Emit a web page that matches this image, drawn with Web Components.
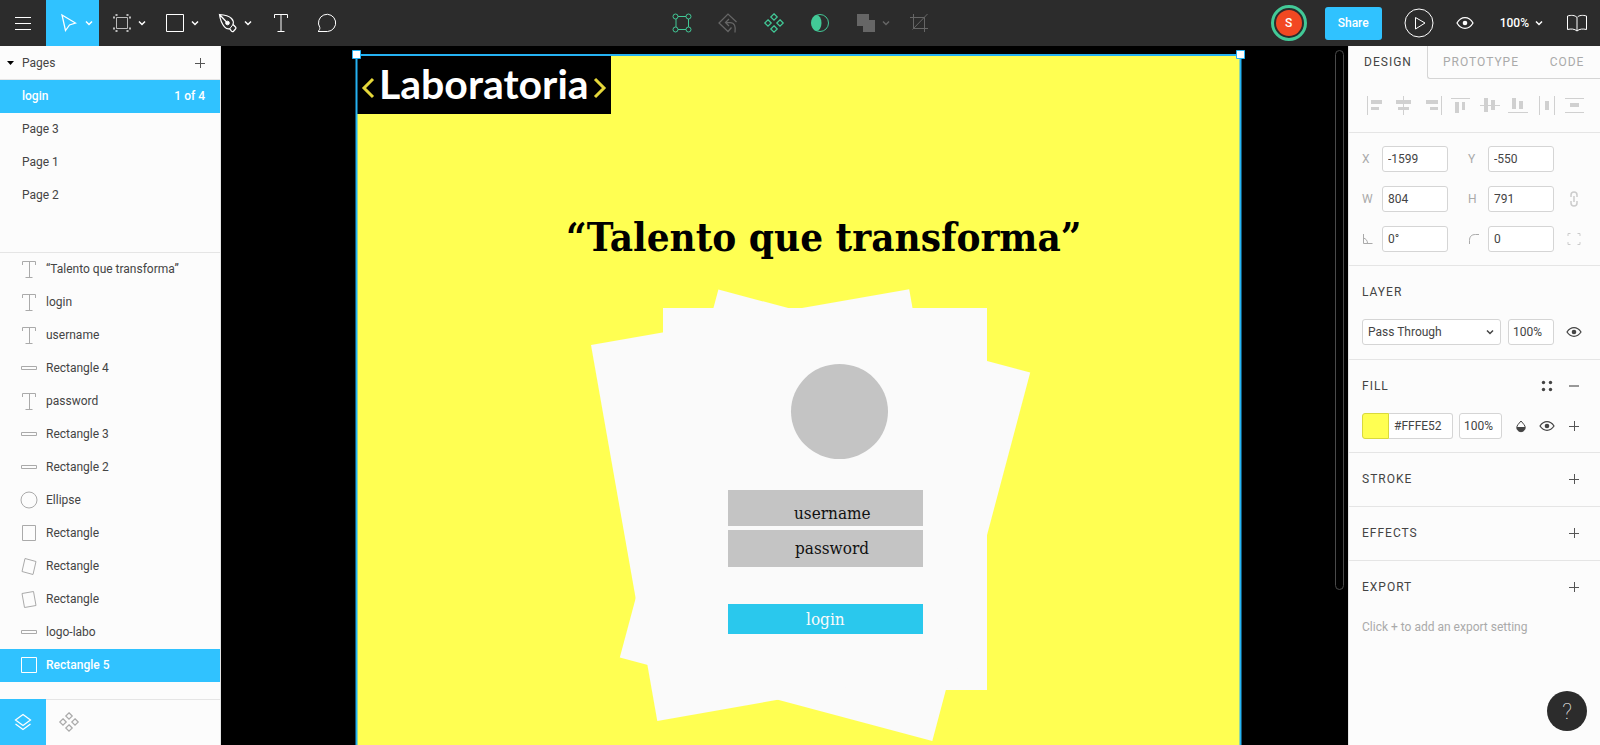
<!DOCTYPE html>
<html lang="es">
<head>
<meta charset="utf-8">
<title>login – Design editor</title>
<style>
  html, body { margin: 0; height: 100%; }
  body { font-family: Roboto, "Liberation Sans", sans-serif; font-size: 12px; color: #444; }
</style>
</head>
<body>
<design-app></design-app>

<script>
const ICONS = {
  menu: [24, 24, '<g shape-rendering="crispEdges"><path d="M4 6.5h16M4 12.5h16M4 18.5h16"/></g>'],
  move: [24, 24, '<path stroke-width="1.250" d="M5 4l13.500 8-6 2-4 5.500z"/>'],
  frame: [24, 24, '<g stroke="#bbb"><path d="M6.500 6.500h11v11h-11z"/><path d="M6.500 3v2M17.500 3v2M6.500 19v2M17.500 19v2M3 6.500h2M3 17.500h2M19 6.500h2M19 17.500h2" stroke-width="2"/></g>'],
  rect: [24, 24, '<path d="M3.500 3.500h17v17h-17z"/>'],
  pen: [24, 24, '<path stroke-width="1.250" d="M3.500 3.500c5 .3 9.500 1.500 12 4 1.800 1.800 2.200 4 1.500 6l2.500 2.500c.8.800.5 1.500 0 2l-2 2.200c-.6.600-1.400.5-2-.1l-1.800-2.300c-2 .5-3.700-.3-5.200-2-2.600-3-4.300-7-5-12.300zM3.500 3.500l7 7.500"/><circle cx="11.500" cy="12" r="1.800" fill="currentColor"/><path d="M13.700 17.800l3.300-4.300"/>'],
  text: [24, 24, '<path d="M5.500 7V3.500h13V7M12 3.500v17M8.500 20.500h7"/>'],
  comment: [24, 24, '<path d="M3 20.500c1.500-1.200 2-2.500 1.800-4A8.600 8.600 0 1 1 12.500 20.500z" stroke-linejoin="round"/>'],
  nodes: [24, 24, '<path d="M8 5.500h8M8 18.500h8M6 8v8M18.500 8v8"/><circle cx="5.500" cy="5.500" r="2.500"/><circle cx="18.500" cy="5.500" r="2.500"/><circle cx="5.500" cy="18.500" r="2.500"/><circle cx="18.500" cy="18.500" r="2.500"/>'],
  revert: [24, 24, '<path stroke-width="1.250" d="M20.500 11L12 3 3 12l9 8.500 3.500-4M9.500 11.500h4.500c4.500 0 6 4 5 10M13 8L9.500 11.500 13 15"/>'],
  component: [24, 24, '<path stroke-width="1.250" d="M12 2.800l3.200 3.200L12 9.200 8.800 6zM12 14.800l3.200 3.200L12 21.200 8.800 18zM6 8.800L9.200 12 6 15.200 2.800 12zM18 8.800l3.200 3.200-3.200 3.200-3.200-3.200z"/>'],
  mask: [24, 24, '<circle cx="12" cy="12" r="8.500"/><ellipse cx="8.500" cy="12" rx="5" ry="8" fill="currentColor" stroke="none"/>'],
  union: [24, 24, '<path fill="currentColor" stroke="none" d="M3 3h12v6h6v12H9v-6H3z"/>'],
  crop: [24, 24, '<path d="M3 6.500h14.500V21M6.500 3v14.500H21M5.500 18.500L20.500 3"/>'],
  play: [30, 30, '<circle cx="15" cy="15" r="14"/><path d="M11.500 9.500v11.500l9.500-6z"/>'],
  eye: [18, 14, '<path stroke-width="1.250" d="M1 7c2-3.500 5-5.300 8-5.300S15 3.500 17 7c-2 3.500-5 5.300-8 5.300S3 10.500 1 7z"/><circle cx="9" cy="7" r="2.300" fill="currentColor" stroke="none"/>'],
  eyeSmall: [16, 12, '<path stroke-width="1.250" d="M1 6c2-3 4.500-4.300 7-4.300S13 3 15 6c-2 3-4.500 4.300-7 4.300S3 9 1 6z"/><circle cx="8" cy="6" r="2.300" fill="currentColor" stroke="none"/>'],
  book: [24, 24, '<path d="M12 6.500C10 4 6 4 2.500 5v13.500c3.500-.8 7-.8 9.500 1.500 2.500-2.300 6-2.300 9.500-1.500V5C18 4 14 4 12 6.500zM12 6.500V20"/>'],
  chevron: [8, 8, '<path stroke-width="1.500" d="M1 2.500l3 3 3-3"/>'],
  plus: [12, 12, '<g shape-rendering="crispEdges" stroke="#555"><path d="M1 6.500h10M6.500 1v10"/></g>'],
  minus: [12, 12, '<path d="M1 6h10" stroke="#777" stroke-width="1.500"/>'],
  dots: [12, 12, '<g fill="currentColor" stroke="none"><circle cx="2.500" cy="2.500" r="1.700"/><circle cx="9.500" cy="2.500" r="1.700"/><circle cx="2.500" cy="9.500" r="1.700"/><circle cx="9.500" cy="9.500" r="1.700"/></g>'],
  drop: [12, 14, '<path d="M6 2C3.500 5 1.800 6.500 1.800 8.500a4.200 4.200 0 0 0 8.400 0C10.200 6.500 8.500 5 6 2z"/><path fill="currentColor" stroke="none" d="M1.800 8h8.400v.5a4.200 4.200 0 0 1-8.400 0z"/>'],
  caret: [8, 8, '<path fill="currentColor" stroke="none" d="M0 2h7L3.500 6z"/>'],
  layerText: [18, 18, '<path d="M2.500 5V1.500h13V5M9.500 1.500v16M5.500 17.500h7"/>'],
  layerLine: [18, 18, '<path d="M1.500 7.500h15v3h-15z"/>'],
  layerEllipse: [18, 18, '<circle cx="9" cy="9" r="8"/>'],
  layerPaper: [18, 18, '<path d="M2.500 1.500h13v15h-13z"/>'],
  layerRight: [18, 18, '<path d="M5 1.500l11 3-3 13-11-3z"/>'],
  layerLeft: [18, 18, '<path d="M2 3.500l11.500-2 2.500 14-11.500 2z"/>'],
  layerSquare: [18, 18, '<path d="M1.500 1.500h15v15h-15z"/>'],
  layers: [24, 24, '<path stroke-width="1.250" d="M12 4.500l7.500 5.500-7.500 5.500L4.500 10zM4.500 14L12 19.500l7.500-5.500"/>'],
  link: [10, 18, '<path d="M2 7V5a3 3 0 0 1 6 0v2M2 11v2a3 3 0 0 0 6 0v-2M5 6v6" stroke-width="1.500"/>'],
  angle: [12, 12, '<path d="M1.500 1v9.500h9M1 5c3 .5 4.500 2.500 4.500 5.500"/>'],
  radius: [12, 12, '<path d="M1.500 11V7.500c0-4 2-6 6-6H11"/>'],
  corners: [14, 14, '<path d="M1 4V1.500h2.500M10.500 1.500H13V4M13 10v2.500h-2.500M3.500 12.500H1V10"/>'],
  alLeft: [20, 20, '<path d="M1.500 1v19"/><path class="f" d="M5 5h11v4H5zM5 12h8v3H5z"/>'],
  alHCenter: [20, 20, '<path d="M9.500 1v19"/><path class="f" d="M2 5h15v4H2zM4 12h11v3H4z"/>'],
  alRight: [20, 20, '<path d="M18.500 1v19"/><path class="f" d="M3 5h12v4H3zM7 12h8v3H7z"/>'],
  alTop: [20, 20, '<path d="M0 3.500h19"/><path class="f" d="M4 7h4v11H4zM11 7h3v8h-3z"/>'],
  alVCenter: [20, 20, '<path d="M0 10.500h20"/><path class="f" d="M4 3h4v14H4zM11 5h4v10h-4z"/>'],
  alBottom: [20, 20, '<path d="M0 17.500h20"/><path class="f" d="M4 3h4v11H4zM11 6h4v8h-4z"/>'],
  distH: [20, 20, '<path d="M2.500 1v19M17.500 1v19"/><path class="f" d="M8 6h4v9H8z"/>'],
  distV: [20, 20, '<path d="M0 3.500h19M0 17.500h19"/><path class="f" d="M5 8h9v4H5z"/>']
};

const define = (name, template) => {
  customElements.define(name, class extends HTMLElement {
    connectedCallback() {
      if (this.shadowRoot) return;
      const root = this.attachShadow({ mode: 'open' });
      root.innerHTML = typeof template === 'function' ? template(this) : template;
    }
  });
};

define('ui-icon', el => {
  const [w, h, body] = ICONS[el.getAttribute('name')];
  return `<style>
    :host { display: block; flex: none; width: ${w}px; height: ${h}px; }
    svg { display: block; fill: none; stroke: currentColor; stroke-width: 1; }
    .f { fill: currentColor; stroke: none; }
  </style><svg width="${w}" height="${h}" viewBox="0 0 ${w} ${h}" aria-hidden="true">${body}</svg>`;
});

define('tool-button', el => `<style>
    :host { display: block; flex: none; color: #fff; }
    :host([tone="green"]) { color: #42c997; }
    :host([tone="dim"]) { color: #666; }
    button { display: flex; align-items: center; gap: 4px; height: 46px; padding: 0 11px; border: 0;
      background: none; color: inherit; font: inherit; }
    :host([menu]) button { padding: 0 6px 0 11px; }
    :host([active]) button { background: #30c2ff; }
  </style>
  <button type="button" aria-label="${el.getAttribute('label')}">
    <ui-icon name="${el.getAttribute('icon')}"></ui-icon>${el.hasAttribute('menu') ? '<ui-icon name="chevron"></ui-icon>' : ''}
  </button>`);

define('top-bar', `<style>
    :host { display: grid; grid-template-columns: 1fr auto 1fr; height: 46px; background: #2c2c2c; color: #fff; }
    div { display: flex; align-items: center; }
    .right { justify-content: flex-end; }
    button { border: 0; background: none; color: inherit; font: inherit; padding: 0; }
    .avatar { box-sizing: border-box; width: 36px; height: 36px; border-radius: 50%; border: 3px solid #42c997;
      padding: 2px; margin-right: 18px; display: flex; }
    .avatar span { flex: 1; border-radius: 50%; background: #f24822; line-height: 26px; text-align: center; font-weight: 500; }
    .share { width: 57px; height: 33px; border-radius: 3px; background: #30c2ff; font-weight: 500; margin-right: 22px; }
    .play { margin-right: 22px; }
    .eye { margin-right: 26px; }
    .zoom { display: flex; align-items: center; gap: 6px; font-weight: 500; margin-right: 11px; }
  </style>
  <div>
    <tool-button icon="menu" label="Menu"></tool-button>
    <tool-button icon="move" label="Move" menu active></tool-button>
    <tool-button icon="frame" label="Frame" menu></tool-button>
    <tool-button icon="rect" label="Rectangle" menu></tool-button>
    <tool-button icon="pen" label="Pen" menu></tool-button>
    <tool-button icon="text" label="Text"></tool-button>
    <tool-button icon="comment" label="Comment"></tool-button>
  </div>
  <div>
    <tool-button icon="nodes" label="Edit object" tone="green"></tool-button>
    <tool-button icon="revert" label="Reset instance" tone="dim"></tool-button>
    <tool-button icon="component" label="Create component" tone="green"></tool-button>
    <tool-button icon="mask" label="Use as mask" tone="green"></tool-button>
    <tool-button icon="union" label="Union" tone="dim" menu></tool-button>
    <tool-button icon="crop" label="Crop" tone="dim"></tool-button>
  </div>
  <div class="right">
    <button type="button" class="avatar"><span>S</span></button>
    <button type="button" class="share">Share</button>
    <button type="button" class="play" aria-label="Present"><ui-icon name="play"></ui-icon></button>
    <button type="button" class="eye" aria-label="View options"><ui-icon name="eye"></ui-icon></button>
    <button type="button" class="zoom">100%<ui-icon name="chevron"></ui-icon></button>
    <tool-button icon="book" label="Library"></tool-button>
  </div>`);

define('list-row', el => `<style>
    :host { display: block; }
    button { display: flex; align-items: center; gap: 8px; box-sizing: border-box; width: 100%; height: 33px;
      padding: 0 15px 2px 22px; border: 0; background: none; color: #444; font: inherit; text-align: left; }
    ui-icon { color: #aaa; margin: 1px 0 0 -2px; }
    .name { flex: 1; }
    :host([selected]) button { background: #30c2ff; color: #fff; font-weight: 500; }
    :host([selected]) ui-icon { color: #fff; }
  </style>
  <button type="button">
    ${el.hasAttribute('icon') ? `<ui-icon name="${el.getAttribute('icon')}"></ui-icon>` : ''}
    <span class="name"><slot></slot></span><slot name="note"></slot>
  </button>`);

define('layers-panel', `<style>
    :host { display: flex; flex-direction: column; background: #fcfcfc; border-right: 1px solid #e5e5e5; min-height: 0; }
    header { display: flex; align-items: center; height: 33px; padding: 0 14px 0 7px; border-bottom: 1px solid #e5e5e5; flex: none; }
    header > ui-icon { color: #000; margin-right: 7px; }
    h2 { flex: 1; margin: 0; font-size: 12px; font-weight: 400; }
    button { padding: 0; border: 0; background: none; color: #444; }
    .pages { flex: none; padding-bottom: 40px; border-bottom: 1px solid #e5e5e5; }
    .layers { flex: 1; min-height: 0; overflow: hidden; }
    footer { display: flex; flex: none; box-sizing: border-box; height: 46px; border-top: 1px solid #e5e5e5; }
    footer button { width: 46px; height: 46px; margin-top: -1px; padding: 0 11px; color: #aaa; }
    footer .on { background: #30c2ff; color: #fff; }
  </style>
  <header><ui-icon name="caret"></ui-icon><h2>Pages</h2>
    <button type="button" aria-label="Add page"><ui-icon name="plus"></ui-icon></button></header>
  <div class="pages">
    <list-row selected>login<span slot="note">1 of 4</span></list-row>
    <list-row>Page 3</list-row>
    <list-row>Page 1</list-row>
    <list-row>Page 2</list-row>
  </div>
  <div class="layers">
    <list-row icon="layerText">“Talento que transforma”</list-row>
    <list-row icon="layerText">login</list-row>
    <list-row icon="layerText">username</list-row>
    <list-row icon="layerLine">Rectangle 4</list-row>
    <list-row icon="layerText">password</list-row>
    <list-row icon="layerLine">Rectangle 3</list-row>
    <list-row icon="layerLine">Rectangle 2</list-row>
    <list-row icon="layerEllipse">Ellipse</list-row>
    <list-row icon="layerPaper">Rectangle</list-row>
    <list-row icon="layerRight">Rectangle</list-row>
    <list-row icon="layerLeft">Rectangle</list-row>
    <list-row icon="layerLine">logo-labo</list-row>
    <list-row icon="layerSquare" selected>Rectangle 5</list-row>
  </div>
  <footer>
    <button type="button" class="on" aria-label="Layers"><ui-icon name="layers"></ui-icon></button>
    <button type="button" aria-label="Components"><ui-icon name="component"></ui-icon></button>
  </footer>`);

define('design-canvas', `<style>
    :host { display: block; position: relative; overflow: hidden; background: #000; min-width: 0; }
    svg { position: absolute; left: 0; top: 0; display: block; overflow: visible; }
    .slab { font-family: "DejaVu Serif Condensed", "DejaVu Serif", serif; }
    .scroll { position: absolute; right: 4px; top: 4px; width: 7px; height: 538px; border: 1px solid #4a4a4a; border-radius: 5px; }
  </style>
  <svg width="1128" height="860" viewBox="0 0 1128 860">
    <rect x="136" y="9" width="884" height="870" fill="#ffff52"/>
    <rect x="136" y="9" width="254" height="59" fill="#000"/>
    <g fill="none" stroke="#e5d73a" stroke-width="3"><path d="M152 33l-9 9 9 9M374 33l9 9-9 9"/></g>
    <text x="158" y="53" font-family="Lato, sans-serif" font-weight="700" font-size="41" fill="#fff">Laboratoria</text>
    <text class="slab" x="345" y="205" font-weight="700" font-size="40" fill="#000">“Talento que transforma”</text>
    <g fill="#fafafa">
      <path d="M442 262h324v382H442z"/>
      <path d="M497.400 243.500L809.200 326.600 711.300 695 398.800 611.600z"/>
      <path d="M688.200 243.200L370 299 436.300 675 754.500 619z"/>
    </g>
    <g fill="#c4c4c4">
      <ellipse cx="618.500" cy="365.500" rx="48.500" ry="47.500"/>
      <path d="M507 444h195v36H507zM507 484h195v37H507z"/>
    </g>
    <path fill="#2ac8ed" d="M507 558h195v30H507z"/>
    <g class="slab" font-size="17" fill="#111">
      <text x="573" y="473">username</text>
      <text x="574" y="508">password</text>
      <text x="585" y="579" fill="#fafafa">login</text>
    </g>
    <path d="M135.500 870V9H1019.500V870" stroke="#25b2f2" stroke-width="2" fill="none"/>
    <path d="M131.500 4.500h8v8h-8zM1015.500 4.500h8v8h-8z" fill="#fff" stroke="#25b2f2"/>
  </svg>
  <div class="scroll"></div>`);

define('num-field', el => `<style>
    :host { display: flex; align-items: center; }
    label { width: 20px; color: #aaa; }
    input { box-sizing: border-box; width: 66px; height: 26px; padding: 0 5px; border: 1px solid #d5d5d5; border-radius: 3px;
      background: #fff; color: #444; font: inherit; }
  </style>
  <label for="v" aria-label="${el.getAttribute('label')}">${el.hasAttribute('icon') ? `<ui-icon name="${el.getAttribute('icon')}"></ui-icon>` : el.getAttribute('label')}</label>
  <input id="v" value="${el.getAttribute('value')}">`);

define('panel-section', el => `<style>
    :host { display: block; border-bottom: 1px solid #e5e5e5; padding: 0 20px 0 13px; }
    :host([last]) { border: 0; }
    header { display: flex; align-items: center; gap: 15px; height: 52px; padding-bottom: 1px; }
    h2 { flex: 1; margin: 0; font-size: 12px; font-weight: 400; letter-spacing: 1px; }
  </style>
  <header><h2>${el.getAttribute('heading')}</h2><slot name="actions"></slot></header><slot></slot>`);

define('design-panel', `<style>
    :host { display: block; background: #fcfcfc; border-left: 1px solid #e5e5e5; min-width: 0; overflow: hidden; }
    button { padding: 0; border: 0; background: none; color: #444; font: inherit; }
    nav { display: flex; height: 33px; }
    nav button { box-sizing: border-box; letter-spacing: 1px; color: #aaa; border-bottom: 1px solid #d5d5d5; padding: 0 15px 1px; }
    nav button.on { color: #444; border: 0; width: 78px; }
    nav .proto { border-left: 1px solid #d5d5d5; border-bottom-left-radius: 3px; }
    nav .code { flex: 1; }
    .align { display: flex; justify-content: space-between; align-items: center; height: 51px; padding: 0 15px 2px 17px;
      border-bottom: 1px solid #e5e5e5; color: #d0d0d0; }
    .align button { color: inherit; }
    .geometry { display: grid; grid-template-columns: 106px 99px 14px; row-gap: 14px; padding: 13px; border-bottom: 1px solid #e5e5e5; }
    .geometry > ui-icon { align-self: center; justify-self: center; color: #ccc; }
    .row { display: flex; align-items: center; height: 26px; padding-bottom: 14px; }
    .fill { padding-bottom: 13px; }
    input, select { box-sizing: border-box; height: 26px; border: 1px solid #d5d5d5; border-radius: 3px; background: #fff;
      color: #444; font: inherit; padding: 0 5px; margin: 0; }
    .pick { position: relative; flex: none; }
    select { appearance: none; width: 139px; display: block; }
    .pick ui-icon { position: absolute; right: 7px; top: 9px; }
    .op { width: 46px; margin: 0 12px 0 7px; padding: 0 4px; }
    .swatch { box-sizing: border-box; flex: none; width: 27px; height: 26px; background: #ffff52; border: 1px solid #d9d93c; border-radius: 3px 0 0 3px; }
    .hex { width: 64px; border-left: 0; border-radius: 0 3px 3px 0; }
    .fill .op { width: 43px; margin: 0 13px 0 6px; }
    .fill .eye { margin: 0 13px 0 12px; }
    p { margin: 0; padding: 6px 0; line-height: 14px; color: #aaa; }
  </style>
  <nav>
    <button type="button" class="on">DESIGN</button>
    <button type="button" class="proto">PROTOTYPE</button>
    <button type="button" class="code">CODE</button>
  </nav>
  <div class="align">
    <button type="button" aria-label="Align left"><ui-icon name="alLeft"></ui-icon></button>
    <button type="button" aria-label="Align horizontal centers"><ui-icon name="alHCenter"></ui-icon></button>
    <button type="button" aria-label="Align right"><ui-icon name="alRight"></ui-icon></button>
    <button type="button" aria-label="Align top"><ui-icon name="alTop"></ui-icon></button>
    <button type="button" aria-label="Align vertical centers"><ui-icon name="alVCenter"></ui-icon></button>
    <button type="button" aria-label="Align bottom"><ui-icon name="alBottom"></ui-icon></button>
    <button type="button" aria-label="Distribute horizontally"><ui-icon name="distH"></ui-icon></button>
    <button type="button" aria-label="Distribute vertically"><ui-icon name="distV"></ui-icon></button>
  </div>
  <div class="geometry">
    <num-field label="X" value="-1599"></num-field><num-field label="Y" value="-550"></num-field><span></span>
    <num-field label="W" value="804"></num-field><num-field label="H" value="791"></num-field><ui-icon name="link"></ui-icon>
    <num-field label="Rotation" icon="angle" value="0°"></num-field><num-field label="Corner radius" icon="radius" value="0"></num-field><ui-icon name="corners"></ui-icon>
  </div>
  <panel-section heading="LAYER">
    <div class="row">
      <div class="pick"><select aria-label="Blend mode"><option>Pass Through</option></select><ui-icon name="chevron"></ui-icon></div>
      <input class="op" aria-label="Layer opacity" value="100%">
      <button type="button" aria-label="Toggle layer"><ui-icon name="eyeSmall"></ui-icon></button>
    </div>
  </panel-section>
  <panel-section heading="FILL">
    <button slot="actions" type="button" aria-label="Styles"><ui-icon name="dots"></ui-icon></button>
    <button slot="actions" type="button" aria-label="Remove fill"><ui-icon name="minus"></ui-icon></button>
    <div class="row fill">
      <button type="button" class="swatch" aria-label="Fill colour"></button><input class="hex" aria-label="Hex" value="#FFFE52">
      <input class="op" aria-label="Fill opacity" value="100%">
      <button type="button" aria-label="Blend"><ui-icon name="drop"></ui-icon></button>
      <button type="button" class="eye" aria-label="Toggle fill"><ui-icon name="eyeSmall"></ui-icon></button>
      <button type="button" aria-label="Add fill"><ui-icon name="plus"></ui-icon></button>
    </div>
  </panel-section>
  <panel-section heading="STROKE"><button slot="actions" type="button" aria-label="Add stroke"><ui-icon name="plus"></ui-icon></button></panel-section>
  <panel-section heading="EFFECTS"><button slot="actions" type="button" aria-label="Add effect"><ui-icon name="plus"></ui-icon></button></panel-section>
  <panel-section heading="EXPORT" last><button slot="actions" type="button" aria-label="Add export"><ui-icon name="plus"></ui-icon></button>
    <p>Click + to add an export setting</p></panel-section>`);

define('help-button', `<style>
    :host { position: absolute; right: 13px; bottom: 14px; }
    button { width: 40px; height: 40px; padding: 0; border: 0; border-radius: 50%; background: #2c2c2c; color: #fff;
      font: 100 22px Roboto, sans-serif; }
  </style><button type="button" aria-label="Help">?</button>`);

define('design-app', `<style>
    :host { display: grid; grid-template: 46px minmax(0, 1fr) / 221px minmax(0, 1fr) 252px; height: 100vh; position: relative; overflow: hidden; }
    top-bar { grid-column: 1 / -1; }
  </style>
  <top-bar></top-bar>
  <layers-panel></layers-panel>
  <design-canvas></design-canvas>
  <design-panel></design-panel>
  <help-button></help-button>`);
</script>
</body>
</html>
